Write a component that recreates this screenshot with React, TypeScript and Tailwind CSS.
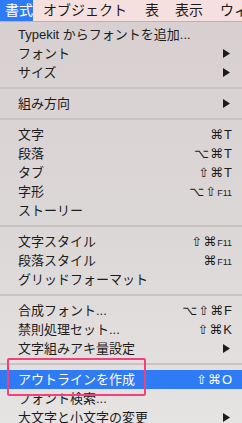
import type { ReactNode } from 'react'

type Item =
  | { kind: 'sep' }
  | { kind: 'item'; label: string; mods?: string; key?: string; small?: boolean; sub?: boolean; active?: boolean }

const items: Item[] = [
  { kind: 'item', label: 'Typekit からフォントを追加...' },
  { kind: 'item', label: 'フォント', sub: true },
  { kind: 'item', label: 'サイズ', sub: true },
  { kind: 'sep' },
  { kind: 'item', label: '組み方向', sub: true },
  { kind: 'sep' },
  { kind: 'item', label: '文字', mods: '⌘', key: 'T' },
  { kind: 'item', label: '段落', mods: '⌥⌘', key: 'T' },
  { kind: 'item', label: 'タブ', mods: '⇧⌘', key: 'T' },
  { kind: 'item', label: '字形', mods: '⌥⇧', key: 'F11', small: true },
  { kind: 'item', label: 'ストーリー' },
  { kind: 'sep' },
  { kind: 'item', label: '文字スタイル', mods: '⇧⌘', key: 'F11', small: true },
  { kind: 'item', label: '段落スタイル', mods: '⌘', key: 'F11', small: true },
  { kind: 'item', label: 'グリッドフォーマット' },
  { kind: 'sep' },
  { kind: 'item', label: '合成フォント...', mods: '⌥⇧⌘', key: 'F' },
  { kind: 'item', label: '禁則処理セット...', mods: '⇧⌘', key: 'K' },
  { kind: 'item', label: '文字組みアキ量設定', sub: true },
  { kind: 'sep' },
  { kind: 'item', label: 'アウトラインを作成', mods: '⇧⌘', key: 'O', active: true },
  { kind: 'item', label: 'フォント検索...' },
  { kind: 'item', label: '大文字と小文字の変更', sub: true },
]

const Arrow = ({ color }: { color: string }) => (
  <svg width="7" height="9" viewBox="0 0 7 9" className="mr-[2px]">
    <path d="M0 0 L7 4.5 L0 9 Z" fill={color} />
  </svg>
)

const Shortcut = ({ mods, keyName, small }: { mods?: string; keyName?: string; small?: boolean }): ReactNode => (
  <span className="flex items-baseline tracking-[1px] font-['Liberation_Sans','DejaVu_Sans',sans-serif] text-[13px]">
    <span>{mods}</span>
    <span className={small ? 'text-[9px] tracking-normal' : 'tracking-normal'}>{keyName}</span>
  </span>
)

const MenuRow = ({ item }: { item: Item }) => {
  if (item.kind === 'sep') {
    return (
      <div className="h-[12px] flex items-center">
        <div className="w-full h-[2px] bg-[#c9c3c3]" />
      </div>
    )
  }
  return (
    <div
      className={
        item.active
          ? 'h-[19px] flex items-center justify-between pl-[18px] pr-[10px] bg-[#2f7bf5] text-white'
          : 'h-[19px] flex items-center justify-between pl-[18px] pr-[10px] text-[#1c1c1c]'
      }
    >
      <span className="text-[13px] leading-none whitespace-nowrap">{item.label}</span>
      {item.sub && <Arrow color={item.active ? '#fff' : '#1c1c1c'} />}
      {item.mods && <Shortcut mods={item.mods} keyName={item.key} small={item.small} />}
    </div>
  )
}

const App = () => {
  return (
    <div className="relative w-[242px] h-[423px] overflow-hidden font-['Liberation_Sans','Noto_Sans_CJK_JP',sans-serif]">
      <div className="h-[22px] flex items-center bg-[#f5dfdf] border-b border-[#b9b2b2] text-[14px] text-[#1c1c1c] whitespace-nowrap">
        <div className="h-full w-[40px] pl-[5px] flex items-center bg-[#2f7bf5] text-white">書式</div>
        <span className="ml-[10px]">オブジェクト</span>
        <span className="ml-[18px]">表</span>
        <span className="ml-[16px]">表示</span>
        <span className="ml-[17px]">ウィ</span>
      </div>
      <div className="pt-[3px] h-[401px] bg-gradient-to-b from-[#d8d0d0] via-[#dcd7d7] to-[#e6e3e3]">
        {items.map((it, i) => (
          <MenuRow key={i} item={it} />
        ))}
      </div>
      <div className="absolute left-[7px] top-[358px] w-[139px] h-[38px] border-2 border-[#f53f7d] rounded-[2px]" />
    </div>
  )
}

export default App
